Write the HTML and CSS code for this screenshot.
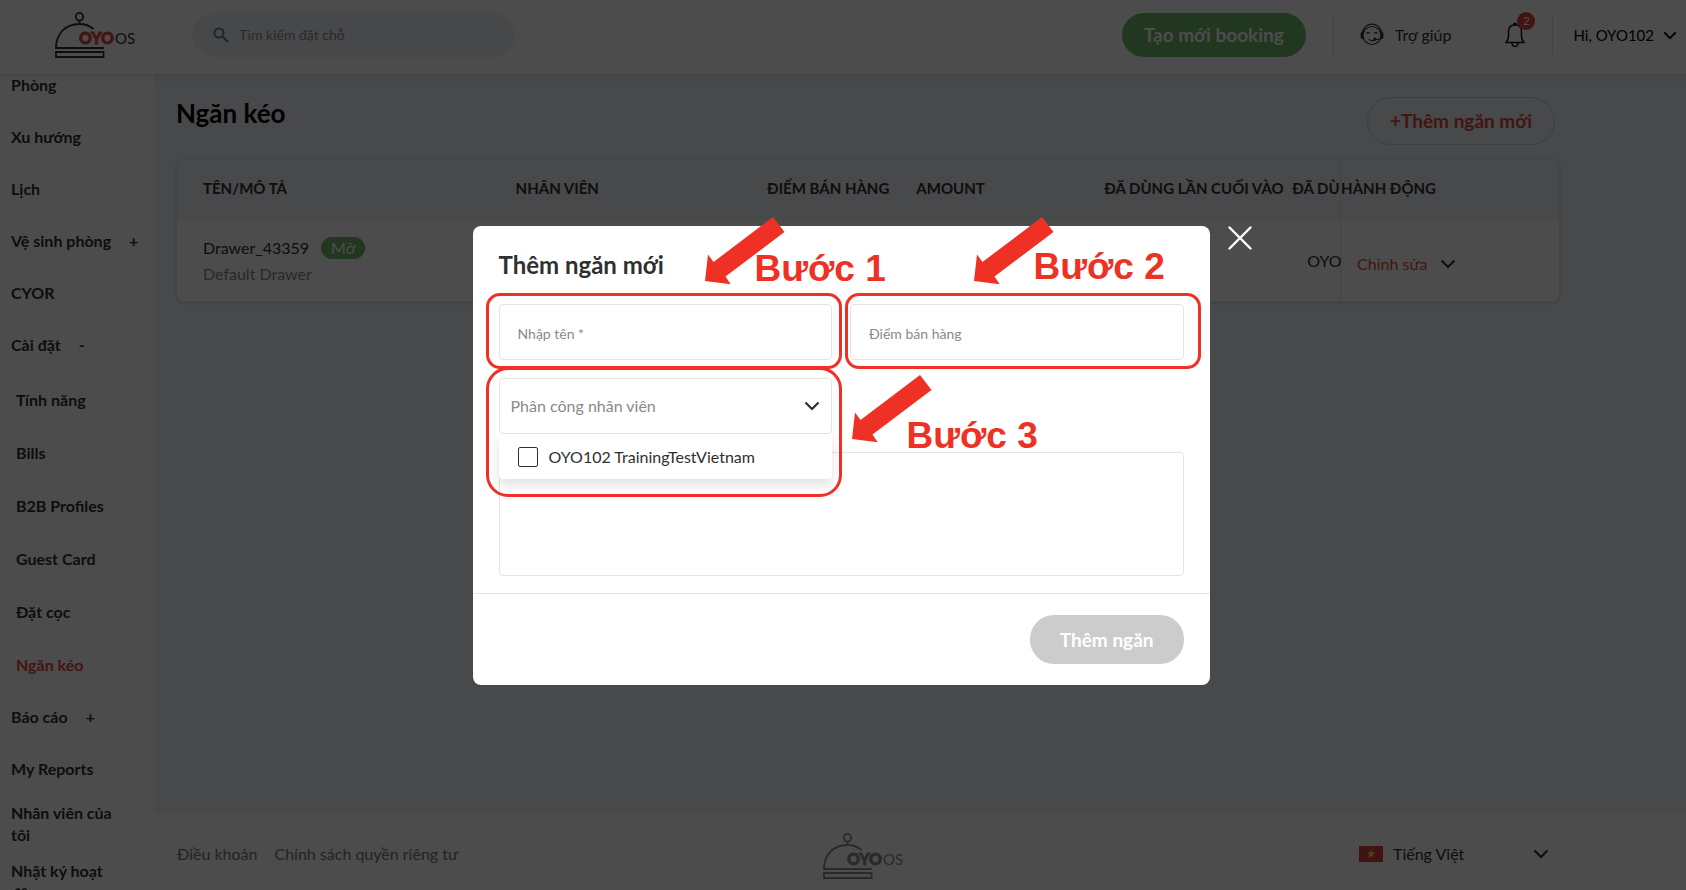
FILE: index.html
```html
<!DOCTYPE html>
<html lang="vi">
<head>
<meta charset="utf-8">
<meta name="viewport" content="width=device-width, initial-scale=1">
<title>Ngăn kéo - OYO OS</title>
<link rel="stylesheet" href="styles.css">
</head>
<body>
<svg class="sprite" aria-hidden="true">
  <symbol id="chevron" viewBox="0 0 16 10"><path d="M1.500 1.500L8 8L14.500 1.500" fill="none" stroke="currentColor" stroke-width="2.200"/></symbol>
  <symbol id="cloche" viewBox="0 0 80 46">
    <g fill="none" stroke="currentColor" stroke-width="1.800">
      <ellipse cx="24.500" cy="4.800" rx="3.600" ry="3.900"/>
      <path d="M24.500 8.700V12M1 36C1 21 11 12 24.500 12C30 12 35 14 38.500 17M0 36H49M1 40H48.500V45H1Z"/>
    </g>
  </symbol>
</svg>

<div class="app">
  <header class="topbar">
    <a class="logo" href="#" aria-label="OYO OS">
      <svg viewBox="0 0 80 46"><use href="#cloche"/><text class="logo-oyo" x="24" y="32">OYO</text><text class="logo-os" x="60" y="32">OS</text></svg>
    </a>
    <label class="search">
      <svg viewBox="0 0 16 16" aria-hidden="true"><circle cx="6" cy="6" r="4.600"/><path d="M9.500 9.500L15 15"/></svg>
      <input type="search" placeholder="Tìm kiếm đặt chỗ" aria-label="Tìm kiếm đặt chỗ">
    </label>
    <button class="btn btn-green" type="button">Tạo mới booking</button>
    <a class="help" href="#">
      <svg viewBox="0 0 24 24" aria-hidden="true">
        <path d="M2.500 9C3.500 4.500 7.300 1.200 12 1.200C16.700 1.200 20.500 4.500 21.500 9"/>
        <circle cx="12" cy="12.500" r="9"/>
        <path d="M2.500 9C.6 9.500.6 15 2.500 15.500ZM21.500 9C23.400 9.500 23.400 15 21.500 15.500ZM21 15.500C19.500 17 17.500 16.500 15.500 16.300M6.500 10.500C7.200 9.200 9 9.200 9.700 10.500M14 10.500C14.700 9.200 16.500 9.200 17.200 10.500M8.800 15.800C10 18.200 13.500 18.400 15 16.400"/>
        <circle cx="14.800" cy="16.200" r="1" fill="#333"/>
      </svg>
      <span>Trợ giúp</span>
    </a>
    <button class="bell" type="button" aria-label="Thông báo">
      <svg viewBox="0 0 20 26" aria-hidden="true"><path d="M1 20.500H19C17 18.500 16.500 17 16.500 14V9.500C16.500 5.500 14 3 10 3C6 3 3.500 5.500 3.500 9.500V14C3.500 17 3 18.500 1 20.500ZM8.500 3C8.500 .6 11.500 .6 11.500 3M7 21C7 25.500 13 25.500 13 21"/></svg>
      <span class="badge">2</span>
    </button>
    <button class="user" type="button"><span>Hi, OYO102</span><svg class="chev-sm" aria-hidden="true"><use href="#chevron"/></svg></button>
  </header>

  <div class="body">
    <nav class="sidebar">
      <ul class="menu">
        <li><a href="#">Phòng</a></li>
        <li><a href="#">Xu hướng</a></li>
        <li><a href="#">Lịch</a></li>
        <li><a href="#">Vệ sinh phòng <span class="sign">+</span></a></li>
        <li><a href="#">CYOR</a></li>
        <li><a href="#">Cài đặt <span class="sign">-</span></a>
          <ul class="submenu">
            <li><a href="#">Tính năng</a></li>
            <li><a href="#">Bills</a></li>
            <li><a href="#">B2B Profiles</a></li>
            <li><a href="#">Guest Card</a></li>
            <li><a href="#">Đặt cọc</a></li>
            <li><a class="active" href="#">Ngăn kéo</a></li>
          </ul>
        </li>
        <li><a href="#">Báo cáo <span class="sign">+</span></a></li>
        <li><a href="#">My Reports</a></li>
        <li><a href="#">Nhân viên của tôi</a></li>
        <li><a href="#">Nhật ký hoạt động</a></li>
      </ul>
    </nav>

    <div class="page">
      <main class="content">
        <div class="heading">
          <h1>Ngăn kéo</h1>
          <button class="btn btn-outline" type="button">+Thêm ngăn mới</button>
        </div>
        <div class="card">
          <table>
            <colgroup><col class="c-name"><col class="c-staff"><col class="c-pos"><col class="c-amount"><col class="c-used"><col class="c-by"><col class="c-action"></colgroup>
            <thead>
              <tr><th>TÊN/MÔ TẢ</th><th>NHÂN VIÊN</th><th>ĐIỂM BÁN HÀNG</th><th>AMOUNT</th><th>ĐÃ DÙNG LẦN CUỐI VÀO</th><th>ĐÃ DÙ</th><th>HÀNH ĐỘNG</th></tr>
            </thead>
            <tbody>
              <tr>
                <td><div class="drawer"><span>Drawer_43359</span><span class="tag">Mở</span></div><div class="muted">Default Drawer</div></td>
                <td></td><td></td><td></td><td></td>
                <td>OYO</td>
                <td><button class="edit" type="button"><span>Chỉnh sửa</span><svg class="chev" aria-hidden="true"><use href="#chevron"/></svg></button></td>
              </tr>
            </tbody>
          </table>
        </div>
      </main>
      <footer class="footer">
        <div class="links"><a href="#">Điều khoản</a><a href="#">Chính sách quyền riêng tư</a></div>
        <div class="logo logo-grey">
          <svg viewBox="0 0 80 46" role="img" aria-label="OYO OS"><use href="#cloche"/><text class="logo-oyo" x="24" y="32">OYO</text><text class="logo-os" x="60" y="32">OS</text></svg>
        </div>
        <label class="language">
          <svg class="flag" viewBox="0 0 24 16" aria-hidden="true"><path fill="#d8453f" d="M0 0H24V16H0Z"/><path fill="#f2e05a" d="M12 3.500L13.100 6.600H16.300L13.700 8.600L14.600 11.800L12 9.900L9.400 11.800L10.300 8.600L7.700 6.600H10.900Z"/></svg>
          <select aria-label="Ngôn ngữ"><option>Tiếng Việt</option></select>
          <svg class="chev" aria-hidden="true"><use href="#chevron"/></svg>
        </label>
      </footer>
    </div>
  </div>
</div>

<div class="overlay">
  <div class="modal" role="dialog" aria-modal="true" aria-labelledby="dialog-title">
    <form>
      <div class="modal-body">
        <h2 id="dialog-title">Thêm ngăn mới</h2>
        <div class="fields">
          <input class="field" type="text" placeholder="Nhập tên *" aria-label="Nhập tên">
          <input class="field" type="text" placeholder="Điểm bán hàng" aria-label="Điểm bán hàng">
          <div class="assign">
            <select class="field" aria-label="Phân công nhân viên"><option>Phân công nhân viên</option></select>
            <svg class="chev" aria-hidden="true"><use href="#chevron"/></svg>
            <label class="options"><input type="checkbox"><span>OYO102 TrainingTestVietnam</span></label>
          </div>
          <textarea class="field notes" aria-label="Mô tả"></textarea>
        </div>
      </div>
      <div class="modal-foot"><button class="btn btn-grey" type="submit" disabled>Thêm ngăn</button></div>
    </form>
    <button class="close" type="button" aria-label="Đóng"><svg viewBox="0 0 24 24"><path d="M1.500 1.500L22.500 22.500M22.500 1.500L1.500 22.500"/></svg></button>

    <div class="mark mark-1"></div>
    <div class="mark mark-2"></div>
    <div class="mark mark-3"></div>
    <svg class="arrow arrow-1" viewBox="0 0 80 68" aria-hidden="true"><path d="M68 0L79.500 15L20.500 59.600L25.700 67.300L0 64L3 37.600L8.500 45Z"/></svg>
    <svg class="arrow arrow-2" viewBox="0 0 80 68" aria-hidden="true"><path d="M68 0L79.500 15L20.500 59.600L25.700 67.300L0 64L3 37.600L8.500 45Z"/></svg>
    <svg class="arrow arrow-3" viewBox="0 0 80 68" aria-hidden="true"><path d="M68 0L79.500 15L20.500 59.600L25.700 67.300L0 64L3 37.600L8.500 45Z"/></svg>
    <strong class="step step-1">Bước 1</strong>
    <strong class="step step-2">Bước 2</strong>
    <strong class="step step-3">Bước 3</strong>
  </div>
</div>
</body>
</html>
```
FILE: styles.css
```css
* { box-sizing: border-box; }
body {
  margin: 0;
  font: 16px/22px Lato, "Liberation Serif", sans-serif;
  color: #303030;
}
button, input, select, textarea { font: inherit; color: inherit; }
button { border: 0; padding: 0; background: none; cursor: pointer; }
a { color: inherit; text-decoration: none; }
ul { list-style: none; margin: 0; padding: 0; }
h1, h2 { margin: 0; font-weight: 700; }
select { appearance: none; background: none; border: 0; }
.sprite { position: absolute; width: 0; height: 0; }
.app { height: 100vh; display: flex; flex-direction: column; overflow: hidden; }
.chev { width: 16px; height: 10px; flex: none; }
.chev-sm { width: 14px; height: 9px; flex: none; }

.btn { border-radius: 24px; padding: 0 22px; height: 44px; font-size: 19px; font-weight: 700; white-space: nowrap; }
.btn-green { background: #70b768; color: #fff; margin-left: auto; }
.btn-outline { height: 48px; border: 1px solid #c9ced6; color: #e0493a; margin-right: 5px; }
.btn-grey { height: 49px; padding: 0 30px; background: #ccc; color: #fff; }

.topbar {
  flex: none; height: 75px; position: relative; z-index: 1;
  display: flex; align-items: center; padding: 0 9px 4px 55px;
  background: #fff; border-bottom: 1px solid #ddd; box-shadow: 0 2px 8px rgba(0,0,0,.08);
}
.logo svg { display: block; width: 80px; height: 46px; }
.logo-oyo { font-size: 16px; font-weight: 900; fill: #e0493a; stroke: #e0493a; stroke-width: .8px; }
.logo-os { font-size: 15px; fill: currentColor; }
.logo-grey { color: #8c8c8c; padding-top: 4px; }
.logo-grey .logo-oyo { fill: #8c8c8c; stroke: #8c8c8c; }
.search {
  width: 323px; height: 44px; margin-left: 57px; border-radius: 22px; background: #edf2f9;
  display: flex; align-items: center; gap: 10px; padding: 0 21px;
}
.search svg { width: 16px; height: 16px; flex: none; fill: none; stroke: #777; stroke-width: 2; }
.search input { border: 0; background: none; flex: 1; min-width: 0; padding: 0; font-size: 14px; outline: 0; }
.search input::placeholder { color: #8a8a8a; opacity: 1; }
.help {
  display: flex; align-items: center; gap: 11px; height: 40px;
  margin-left: 27px; padding-left: 26px; border-left: 1px solid #ddd;
}
.help svg { width: 24px; height: 24px; fill: none; stroke: #333; stroke-width: 1.2; }
.bell { position: relative; width: 20px; height: 26px; margin: 0 27px 0 54px; }
.bell svg { display: block; width: 20px; height: 26px; fill: none; stroke: #111; stroke-width: 1.5; }
.badge {
  position: absolute; left: 12px; top: -10px; width: 18px; height: 18px; border-radius: 50%;
  background: #e0493a; color: #fff; font-size: 12px; line-height: 18px;
}
.user { display: flex; align-items: center; gap: 9px; height: 40px; padding-left: 20px; border-left: 1px solid #ddd; color: #000; font-size: 15px; }

.body { flex: 1; min-height: 0; display: flex; }
.sidebar { width: 154px; flex: none; background: #fff; overflow: hidden; font-weight: 700; }
.menu { margin-top: -16px; }
.menu a { display: flex; align-items: center; min-height: 52px; padding: 7px 32px 7px 11px; }
.menu a:has(.sign) { padding-right: 0; gap: 18px; }
.submenu { padding-top: 2px; }
.submenu a { min-height: 53px; padding-left: 16px; }
.menu .active { color: #e0493a; }

.page { flex: 1; min-width: 0; display: flex; flex-direction: column; background: #f0f3f7; }
.content { flex: 1; padding: 22px 126px 0 22px; }
.heading { display: flex; justify-content: space-between; }
h1 { font-size: 26px; line-height: 32px; color: #000; }
.card { margin-top: 14px; border: 1px solid #e4e7ea; border-radius: 8px; overflow: hidden; background: #fff; box-shadow: 0 1px 3px rgba(0,0,0,.15); }
table { width: 100%; table-layout: fixed; border-collapse: collapse; }
.c-name { width: 24.500%; }
.c-staff { width: 18.200%; }
.c-pos { width: 10.800%; }
.c-amount { width: 13.600%; }
.c-used { width: 13.600%; }
.c-by { width: 3.500%; }
.c-action { width: 15.800%; }
th, td { padding: 0; text-align: left; white-space: nowrap; }
th { height: 60px; padding-bottom: 4px; background: #f0f3f7; font-size: 15px; }
td { height: 81px; }
th:first-child, td:first-child { padding-left: 26px; }
th:last-child, td:last-child { border-left: 1px solid #dfe2e6; }
td:nth-child(6) { padding-left: 15px; }
td:last-child { padding: 6px 0 0 16px; }
.drawer { display: flex; align-items: center; gap: 12px; margin-bottom: 4px; }
.tag { padding: 0 10px; border-radius: 11px; background: #70b768; color: #fff; }
.muted { color: #8a8a8a; }
.edit { display: flex; align-items: center; gap: 12px; color: #e0493a; }
.edit svg { color: #303030; }

.footer {
  height: 76px; flex: none; background: #fff; padding: 4px 137px 0 23px;
  display: grid; grid-template-columns: 1fr auto 1fr; align-items: center;
}
.links { display: flex; gap: 17px; color: #777; }
.language { justify-self: end; width: 190px; display: flex; align-items: center; gap: 10px; }
.language select { flex: 1; min-width: 0; padding: 0; }
.flag { width: 24px; height: 16px; }

.overlay {
  position: fixed; inset: 0; z-index: 10; background: rgba(0,0,0,.7);
  display: flex; justify-content: center; align-items: flex-start; padding: 226px 4px 0 0;
}
.modal { position: relative; width: 737px; background: #fff; border-radius: 8px; }
.modal-body { padding: 25px 26px 17px; }
h2 { font-size: 24px; line-height: 28px; margin-bottom: 25px; }
.fields { display: grid; grid-template-columns: 1fr 1fr; gap: 18px; }
.field {
  width: 100%; height: 56px; display: block; border: 1px solid #e4e4e4; border-radius: 4px;
  padding: 2px 18px 0; background: #fff; font-size: 14px; outline: 0;
}
.field::placeholder { color: #8a8a8a; opacity: 1; }
.assign { position: relative; grid-column: 1; }
.assign .field { padding: 0 11px; font-size: 16px; color: #8a8a8a; }
.assign .chev { position: absolute; right: 12px; top: 23px; }
.options {
  position: absolute; top: 56px; left: 0; right: 0; height: 45px; display: flex; align-items: center; gap: 11px;
  padding-left: 19px; background: #fff; border-radius: 0 0 4px 4px; box-shadow: 0 6px 12px rgba(0,0,0,.12);
}
.options input { appearance: none; width: 20px; height: 20px; margin: 0; border: 1px solid #303030; border-radius: 2px; }
.notes { grid-column: 1 / -1; height: 124px; resize: none; }
.modal-foot { display: flex; justify-content: flex-end; padding: 21px 26px; border-top: 1px solid #e4e4e4; }
.close { position: absolute; left: 100%; top: 0; margin-left: 18px; width: 24px; height: 24px; }
.close svg { display: block; fill: none; stroke: #fff; stroke-width: 2.400; stroke-linecap: round; }

.mark { position: absolute; left: 13px; top: 67px; width: 356px; height: 76px; border: 3px solid #ee3124; border-radius: 14px; pointer-events: none; }
.mark-2 { left: 372px; }
.mark-3 { top: 141px; height: 130px; border-radius: 22px; }
.arrow { position: absolute; width: 80px; height: 68px; fill: #ee3124; }
.arrow-1 { left: 232px; top: -9px; }
.arrow-2 { left: 501px; top: -9px; }
.arrow-3 { left: 379px; top: 149px; }
.step { position: absolute; font: 700 37px/44px "Liberation Sans", sans-serif; color: #ee3124; white-space: nowrap; }
.step-1 { left: 282px; top: 21px; }
.step-2 { left: 561px; top: 19px; }
.step-3 { left: 434px; top: 188px; }
```
